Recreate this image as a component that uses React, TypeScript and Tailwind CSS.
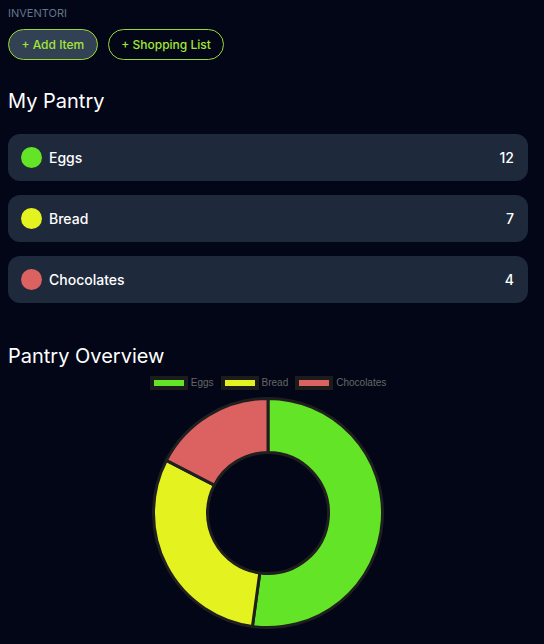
import React from 'react';

type Item = { name: string; count: number; color: string };

const items: Item[] = [
  { name: 'Eggs', count: 12, color: '#63e426' },
  { name: 'Bread', count: 7, color: '#e4f320' },
  { name: 'Chocolates', count: 4, color: '#dc6161' },
];

export default function App() {
  return (
    <div className="w-[544px] h-[644px] overflow-hidden bg-[#020617] font-['Inter',sans-serif]">
      <div className="ml-2 w-[520px]">
        <div className="pt-[5px] text-[11px] leading-4 text-slate-500">INVENTORI</div>

        <div className="mt-2 flex gap-[10px]">
          <button className="h-[31px] px-[12.5px] rounded-full border border-[#9ad733] bg-[#334155] text-[12px] font-medium text-[#a3e635]">
            + Add Item
          </button>
          <button className="h-[31px] px-[12.5px] rounded-full border border-[#9ad733] text-[12px] font-medium text-[#a3e635]">
            + Shopping List
          </button>
        </div>

        <h2 className="mt-[27px] text-xl leading-7 text-white">My Pantry</h2>

        <div className="mt-[19px] flex flex-col gap-[14px]">
          {items.map((item) => (
            <PantryRow key={item.name} item={item} />
          ))}
        </div>

        <h2 className="mt-[39px] text-xl leading-7 text-white">Pantry Overview</h2>

        <PantryChart data={items} />
      </div>
    </div>
  );
}

function PantryRow({ item }: { item: Item }) {
  return (
    <div className="h-[47px] rounded-xl bg-[#1e293b] flex items-center pl-[13px] pr-[14px]">
      <span className="w-[21px] h-[21px] rounded-full" style={{ backgroundColor: item.color }} />
      <span className="ml-[7px] text-sm font-medium text-white">{item.name}</span>
      <span className="ml-auto text-sm font-medium text-white">{item.count}</span>
    </div>
  );
}

function PantryChart({ data }: { data: Item[] }) {
  const total = data.reduce((s, d) => s + d.count, 0);
  const c = 116;
  const outer = 114.5;
  const inner = 60.5;
  const pt = (r: number, a: number) => `${c + r * Math.sin(a)} ${c - r * Math.cos(a)}`;

  let start = 0;
  const slices = data.map((d) => {
    const sweep = (d.count / total) * Math.PI * 2;
    const end = start + sweep;
    const large = sweep > Math.PI ? 1 : 0;
    const path = `M ${pt(outer, start)} A ${outer} ${outer} 0 ${large} 1 ${pt(outer, end)} L ${pt(inner, end)} A ${inner} ${inner} 0 ${large} 0 ${pt(inner, start)} Z`;
    start = end;
    return { ...d, path };
  });

  return (
    <div className="flex flex-col items-center">
      <div className="mt-[5px] flex items-center font-['Liberation_Sans',sans-serif] text-[10px] text-[#666]">
        {data.map((d) => (
          <div key={d.name} className="flex items-center gap-[3px] mx-[3.5px]">
            <span className="w-[38px] h-[14px] border-4 border-[#1c1c1c]" style={{ backgroundColor: d.color }} />
            <span>{d.name}</span>
          </div>
        ))}
      </div>
      <svg width="232" height="232" viewBox="0 0 232 232" className="mt-[7px]">
        {slices.map((s) => (
          <path key={s.name} d={s.path} fill={s.color} stroke="#1f1f1f" strokeWidth="3" strokeLinejoin="round" />
        ))}
      </svg>
    </div>
  );
}
